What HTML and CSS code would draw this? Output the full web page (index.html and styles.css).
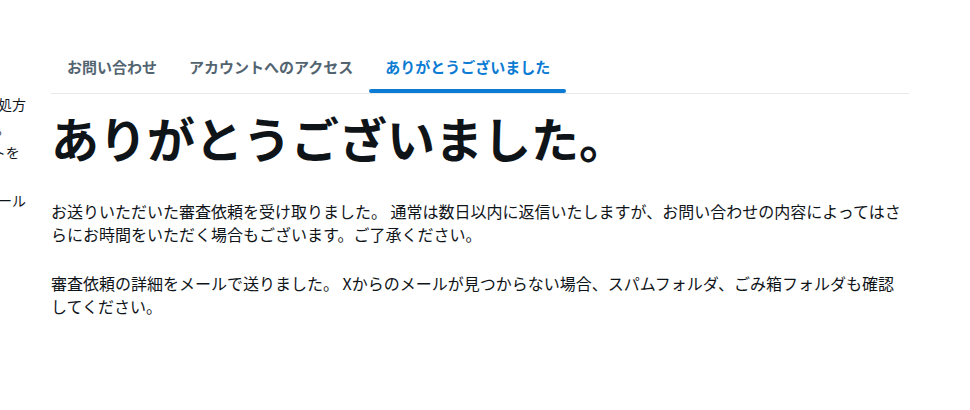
FILE: index.html
```html
<!DOCTYPE html>
<html lang="ja">
<head>
<meta charset="utf-8">
<title>ありがとうございました</title>
<link rel="stylesheet" href="styles.css">
</head>
<body>
<div class="page">
  <aside class="sidebar">
    <p class="side-text">ログインできない場合の対処方法をこちらでご案内します。</p>
    <p class="side-text">また、2段階認証のリセットを希望する場合の手順です。</p>
    <p class="side-text">問い合わせの確認は登録メールアドレスに届きます。</p>
  </aside>
  <main class="main">
    <nav class="tabs">
      <a class="tab">お問い合わせ</a>
      <a class="tab">アカウントへのアクセス</a>
      <a class="tab tab-active">ありがとうございました</a>
    </nav>
    <h1 class="title">ありがとうございました。</h1>
    <p class="body-text">お送りいただいた審査依頼を受け取りました。 通常は数日以内に返信いたしますが、お問い合わせの内容によってはさらにお時間をいただく場合もございます。ご了承ください。</p>
    <p class="body-text">審査依頼の詳細をメールで送りました。 Xからのメールが見つからない場合、スパムフォルダ、ごみ箱フォルダも確認してください。</p>
  </main>
</div>
</body>
</html>
```

FILE: styles.css
```css
html, body {
  margin: 0;
  padding: 0;
  background: #ffffff;
}

body {
  overflow: hidden;
  font-family: "Noto Sans CJK JP", "Noto Sans", sans-serif;
  color: #0f1419;
}

.page {
  display: flex;
  align-items: flex-start;
  width: 970px;
  height: 410px;
}

.sidebar {
  flex: 0 0 197px;
  width: 197px;
  margin-left: -170px;
  padding-top: 92px;
}

.side-text {
  margin: 0;
  font-size: 14px;
  line-height: 24px;
  color: #0f1419;
}

.main {
  flex: 0 0 858px;
  width: 858px;
  margin-left: 24px;
  padding-top: 41px;
}

.tabs {
  display: flex;
  border-bottom: 1px solid #e7e9ea;
}

.tab {
  position: relative;
  padding: 16px;
  font-size: 15px;
  line-height: 20px;
  font-weight: 700;
  color: #536471;
  text-decoration: none;
}

.tab-active {
  color: #0b7bd3;
}

.tab-active::after {
  content: "";
  position: absolute;
  left: 0;
  right: 0;
  bottom: 0;
  height: 4px;
  border-radius: 2px;
  background: #0b7bd3;
}

.title {
  margin: 15px 0 33px;
  font-size: 48px;
  line-height: 1.2;
  font-weight: 700;
  color: #0f1419;
}

.body-text {
  margin: 0 0 25px;
  font-size: 16px;
  line-height: 23.5px;
  color: #0f1419;
}
```
